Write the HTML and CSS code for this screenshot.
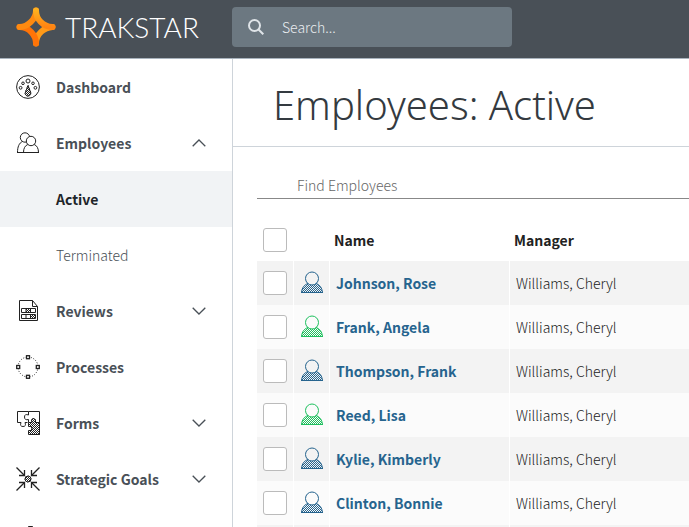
FILE: index.html
```html
<!DOCTYPE html>
<html lang="en">
<head>
<meta charset="utf-8">
<title>Employees: Active</title>
<link rel="stylesheet" href="styles.css">
</head>
<body>
<svg class="defs" width="0" height="0">
	<defs>
		<pattern id="dots" width="2" height="2" patternUnits="userSpaceOnUse">
			<rect width="1" height="1" fill="#fff"/>
			<rect x="1" y="1" width="1" height="1" fill="#fff"/>
		</pattern>
		<mask id="dot_mask" maskUnits="userSpaceOnUse" x="0" y="0" width="24" height="24">
			<rect width="24" height="24" fill="url(#dots)"/>
		</mask>
		<linearGradient id="flame" x1="0" y1="0" x2="0" y2="1">
			<stop offset="0" stop-color="#ffb01f"/>
			<stop offset="1" stop-color="#ff8412"/>
		</linearGradient>
	</defs>
	<symbol id="person" viewBox="0 0 24 24">
		<path d="M1.500 21.500C2 16.500 4.500 13.500 8 12.500C10.500 14.500 13.500 14.500 16 12.500C19.500 13.500 22 16.500 22.500 21.500Z" fill="currentColor" mask="url(#dot_mask)"/>
		<path d="M1.500 21.500C2 16.500 4.500 13.500 8 12.500M16 12.500C19.500 13.500 22 16.500 22.500 21.500" fill="none" stroke="currentColor"/>
		<path d="M1 21.500H23" fill="none" stroke="currentColor"/>
		<circle cx="12" cy="7.500" r="6.500" fill="none" stroke="currentColor"/>
	</symbol>
	<symbol id="chevron_down" viewBox="0 0 14 8">
		<path d="M0.700 0.700L7 7L13.300 0.700" fill="none" stroke="currentColor" stroke-width="1.300"/>
	</symbol>
	<symbol id="chevron_up" viewBox="0 0 14 8">
		<path d="M0.700 7.300L7 1L13.300 7.300" fill="none" stroke="currentColor" stroke-width="1.300"/>
	</symbol>
</svg>

<header class="topbar">
	<a class="brand" href="#">
		<svg class="brand_mark" width="40" height="40" viewBox="0 0 40 40" fill="none" stroke-width="6" stroke-linecap="round">
			<path d="M20 36.500C20 27 28 20.500 36.500 20" stroke="#ff9a18"/>
			<path d="M3.500 20C13 20 20 28 20 36.500" stroke="#ff7408"/>
			<path d="M3.500 20C12 20 20 12 20 3.500" stroke="#ff8a10"/>
			<path d="M20 3.500C20 12 27 20 36.500 20" stroke="url(#flame)"/>
		</svg>
		<span class="brand_name">TRAKSTAR</span>
	</a>
	<form class="search" action="#">
		<svg width="16" height="16" viewBox="0 0 16 16" fill="none" stroke="#dfe4e8" stroke-width="2">
			<circle cx="6.500" cy="6.500" r="5.500"/>
			<path d="M10.500 10.500L15.300 15.300"/>
		</svg>
		<input class="search_edit" type="search" name="q" placeholder="Search..." aria-label="Search">
	</form>
</header>

<div class="client_area">
	<nav class="sidebar">
		<a class="nav_item" href="#">
			<svg class="nav_icon" viewBox="0 0 24 24">
				<circle cx="12" cy="12" r="11.400"/>
				<circle cx="12" cy="6" r="2"/>
				<circle cx="7" cy="8.300" r="1.300"/>
				<circle cx="17" cy="8.300" r="1.300"/>
				<circle cx="4.600" cy="12.800" r="1.400"/>
				<circle cx="19.400" cy="12.800" r="1.400"/>
				<path d="M12 10.500L14.500 17A2.800 2.800 0 1 1 9.500 17Z"/>
				<path d="M12 10.500L14.500 17A2.800 2.800 0 1 1 9.500 17Z" fill="currentColor" mask="url(#dot_mask)"/>
			</svg>
			<span class="nav_text">Dashboard</span>
		</a>
		<a class="nav_item" href="#">
			<svg class="nav_icon" viewBox="0 0 24 24">
				<circle cx="9" cy="6.500" r="4.700"/>
				<path d="M1.500 21.500C1.500 16 3 12 6.500 10.500"/>
				<circle cx="15" cy="10" r="4.700" fill="#fff"/>
				<path d="M7.500 21.500C7.500 17.500 9 14.500 11.800 13.500M18.200 13.500C21 14.500 22.500 17.500 22.500 21.500M1 21.500H23"/>
			</svg>
			<span class="nav_text">Employees</span>
			<svg class="chevron" width="14" height="8"><use href="#chevron_up"/></svg>
		</a>
		<a class="nav_item nav_sub active" href="#">Active</a>
		<a class="nav_item nav_sub" href="#">Terminated</a>
		<a class="nav_item" href="#">
			<svg class="nav_icon" viewBox="0 0 24 24">
				<path d="M3.500 1.500H16.500L21.500 7.500V21.500H3.500ZM16.500 1.500V7.500H21.500"/>
				<path d="M5.500 9.500H19.500V13.500H5.500ZM5.500 15.500H19.500V19.500H5.500ZM10 9.500V13.500M14.500 9.500V13.500M10 15.500V19.500M14.500 15.500V19.500"/>
				<path d="M10 10H14V13H10ZM15 16H19V19H15Z" fill="currentColor" stroke="none" mask="url(#dot_mask)"/>
			</svg>
			<span class="nav_text">Reviews</span>
			<svg class="chevron" width="14" height="8"><use href="#chevron_down"/></svg>
		</a>
		<a class="nav_item" href="#">
			<svg class="nav_icon" viewBox="0 0 24 24">
				<circle cx="12" cy="12" r="10" stroke-dasharray="1 1.620"/>
				<g fill="#fff" stroke-width="1.300">
					<rect x="10.500" y="0.700" width="3" height="3"/>
					<rect x="10.500" y="20.300" width="3" height="3"/>
					<rect x="0.700" y="10.500" width="3" height="3"/>
					<rect x="20.300" y="10.500" width="3" height="3"/>
				</g>
			</svg>
			<span class="nav_text">Processes</span>
		</a>
		<a class="nav_item" href="#">
			<svg class="nav_icon" viewBox="0 0 24 24">
				<path d="M12.500 0.500H1.500V11.500H5Q3.500 15.500 7 15.500T9 11.500H11.500"/>
				<path d="M12.500 0.500V4Q8.500 2.500 8.500 6T12.500 8.500V11.500M12.500 0.500H23.500V11"/>
				<path d="M12.500 11.500H16Q14.500 7.500 17.500 7.500T19.500 11.500H23.500V23.500H12.500V19.500Q16 20.500 16 17.500T12.500 15.500Z" fill="#fff"/>
				<path d="M12.500 11.500H16Q14.500 7.500 17.500 7.500T19.500 11.500H23.500V23.500H12.500V19.500Q16 20.500 16 17.500T12.500 15.500Z" fill="currentColor" mask="url(#dot_mask)"/>
			</svg>
			<span class="nav_text">Forms</span>
			<svg class="chevron" width="14" height="8"><use href="#chevron_down"/></svg>
		</a>
		<a class="nav_item" href="#">
			<svg class="nav_icon" viewBox="0 0 24 24">
				<circle cx="12" cy="12" r="3"/>
				<circle cx="12" cy="12" r="3" fill="currentColor" mask="url(#dot_mask)"/>
				<path stroke-width="1.300" d="M0.500 0.500L8.500 8.500M23.500 0.500L15.500 8.500M0.500 23.500L8.500 15.500M23.500 23.500L15.500 15.500"/>
				<path stroke-width="1.300" d="M3 8.500H8.500V3M21 8.500H15.500V3M3 15.500H8.500V21M21 15.500H15.500V21"/>
			</svg>
			<span class="nav_text">Strategic Goals</span>
			<svg class="chevron" width="14" height="8"><use href="#chevron_down"/></svg>
		</a>
		<a class="nav_item" href="#" aria-label="More">
			<svg class="nav_icon" viewBox="0 0 24 24">
				<path d="M12.500 3.500H16.500V6.500H12.500Z" fill="currentColor"/>
				<path d="M2.500 9.500H21.500V21.500H2.500Z"/>
			</svg>
		</a>
	</nav>

	<main class="panel">
		<h1 class="page_title">Employees: Active</h1>
		<div class="content">
			<input class="find_edit" type="text" name="find" placeholder="Find Employees" aria-label="Find Employees">
			<table class="employees">
				<thead>
					<tr>
						<th class="check_col"><input class="check" type="checkbox" aria-label="Select all"></th>
						<th class="icon_col"></th>
						<th class="name_col">Name</th>
						<th>Manager</th>
					</tr>
				</thead>
				<tbody>
					<tr>
						<td><input class="check" type="checkbox" aria-label="Johnson, Rose"></td>
						<td><svg class="person" width="24" height="24"><use href="#person"/></svg></td>
						<td><a href="#">Johnson, Rose</a></td>
						<td>Williams, Cheryl</td>
					</tr>
					<tr>
						<td><input class="check" type="checkbox" aria-label="Frank, Angela"></td>
						<td><svg class="person green" width="24" height="24"><use href="#person"/></svg></td>
						<td><a href="#">Frank, Angela</a></td>
						<td>Williams, Cheryl</td>
					</tr>
					<tr>
						<td><input class="check" type="checkbox" aria-label="Thompson, Frank"></td>
						<td><svg class="person" width="24" height="24"><use href="#person"/></svg></td>
						<td><a href="#">Thompson, Frank</a></td>
						<td>Williams, Cheryl</td>
					</tr>
					<tr>
						<td><input class="check" type="checkbox" aria-label="Reed, Lisa"></td>
						<td><svg class="person green" width="24" height="24"><use href="#person"/></svg></td>
						<td><a href="#">Reed, Lisa</a></td>
						<td>Williams, Cheryl</td>
					</tr>
					<tr>
						<td><input class="check" type="checkbox" aria-label="Kylie, Kimberly"></td>
						<td><svg class="person" width="24" height="24"><use href="#person"/></svg></td>
						<td><a href="#">Kylie, Kimberly</a></td>
						<td>Williams, Cheryl</td>
					</tr>
					<tr>
						<td><input class="check" type="checkbox" aria-label="Clinton, Bonnie"></td>
						<td><svg class="person" width="24" height="24"><use href="#person"/></svg></td>
						<td><a href="#">Clinton, Bonnie</a></td>
						<td>Williams, Cheryl</td>
					</tr>
					<tr>
						<td></td>
						<td></td>
						<td></td>
						<td></td>
					</tr>
				</tbody>
			</table>
		</div>
	</main>
</div>
</body>
</html>
```
FILE: styles.css
```css
*
{
	box-sizing : border-box;
}
body
{
	margin : 0;
	height : 100vh;
	display : flex;
	flex-direction : column;
	overflow : hidden;
	background-color : white;
	color : #222;
	font-family : "Noto Sans CJK SC", sans-serif;
	font-size : 14px;
	line-height : 24px;
	font-weight : 300;
}
a
{
	text-decoration : none;
}
.defs
{
	position : absolute;
}
.topbar
{
	flex : none;
	display : flex;
	align-items : center;
	height : 59px;
	padding-bottom : 4px;
	background-color : #495057;
	border-bottom : 1px solid #a9b3bd;
}
.brand
{
	flex : none;
	display : flex;
	align-items : center;
	gap : 9px;
	width : 232px;
	padding-left : 16px;
	color : white;
}
.brand_name
{
	font-family : Lato, sans-serif;
	font-size : 28px;
	font-weight : 300;
}
.search
{
	display : flex;
	align-items : center;
	gap : 18px;
	width : 280px;
	height : 40px;
	padding : 0 16px;
	border-radius : 4px;
	background-color : #6c7881;
}
.search svg
{
	flex : none;
}
.search_edit
{
	flex : 1;
	min-width : 0;
	padding : 0;
	border : none;
	outline : none;
	background : none;
	color : white;
	font : inherit;
}
.search_edit::placeholder
{
	color : #e9ecef;
}
.client_area
{
	flex : 1;
	min-height : 0;
	display : flex;
}
.sidebar
{
	flex : none;
	width : 233px;
	overflow : hidden;
	border-right : 1px solid #ced4da;
}
.nav_item
{
	display : flex;
	align-items : center;
	gap : 16px;
	height : 56px;
	padding : 0 26px 0 16px;
	color : #495057;
	font-weight : 700;
}
.nav_item:hover
{
	background-color : #f8f9fa;
}
.nav_sub
{
	padding-left : 56px;
	font-weight : 300;
}
.nav_sub.active
{
	background-color : #f1f3f5;
	color : #212529;
	font-weight : 700;
}
.nav_icon
{
	flex : none;
	width : 24px;
	height : 24px;
	color : #222;
	fill : none;
	stroke : currentColor;
}
.nav_text
{
	flex : 1;
	white-space : nowrap;
}
.chevron
{
	flex : none;
}
.panel
{
	flex : 1;
	min-width : 0;
	overflow : hidden;
}
.page_title
{
	margin : 0;
	padding : 18px 0 13px 40px;
	border-bottom : 1px solid #ced4da;
	color : #343a40;
	font-family : "Noto Sans", sans-serif;
	font-size : 40px;
	line-height : 56px;
	font-weight : 300;
	white-space : nowrap;
}
.content
{
	padding : 24px 0 0 24px;
}
.find_edit
{
	display : block;
	width : 100%;
	height : 28px;
	padding : 0 40px;
	border : none;
	border-bottom : 1px solid #888;
	outline : none;
	font : inherit;
}
.find_edit::placeholder
{
	color : #666;
}
.employees
{
	width : 100%;
	margin-top : 20px;
	table-layout : fixed;
	border-spacing : 0;
}
.employees th
{
	height : 42px;
	padding : 0 5px;
	text-align : left;
	font-weight : 700;
}
.employees td
{
	height : 44px;
	padding : 0 6px;
	border-left : 1px solid white;
	white-space : nowrap;
}
.employees th:first-child, .employees td:first-child
{
	padding : 0 6px;
	border-left : none;
}
.employees tbody tr:nth-child(odd)
{
	background-color : #f3f3f3;
}
.employees tbody tr:nth-child(even)
{
	background-color : #fbfbfb;
}
.employees a
{
	color : #26648e;
	font-weight : 700;
}
.check_col
{
	width : 36px;
}
.icon_col
{
	width : 36px;
}
.name_col
{
	width : 180px;
}
.check
{
	display : block;
	appearance : none;
	width : 24px;
	height : 24px;
	margin : 0;
	border : 1px solid #bbb;
	border-radius : 3px;
	background-color : white;
}
.check:checked
{
	background-color : #26648e;
}
.person
{
	display : block;
	color : #26648e;
}
.green
{
	color : #1fc15f;
}
```
